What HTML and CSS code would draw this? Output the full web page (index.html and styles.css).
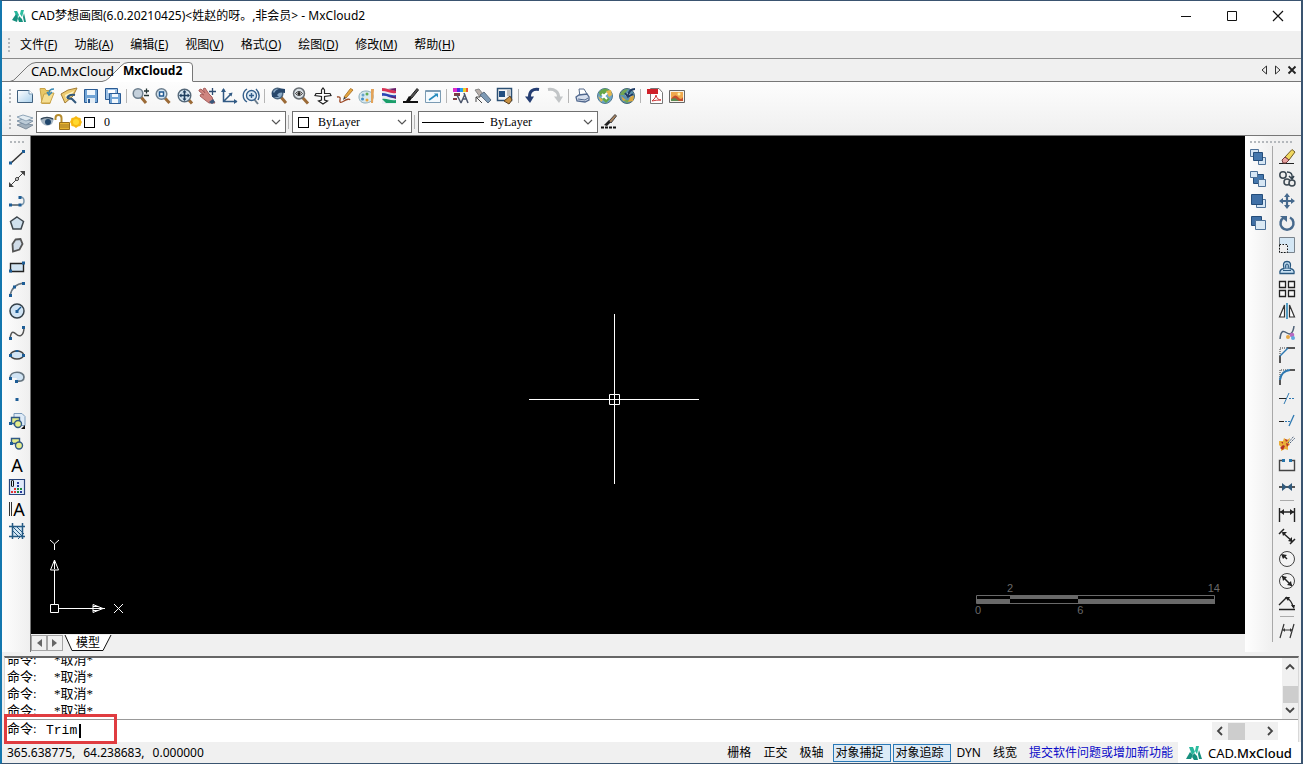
FILE: index.html
```
<!DOCTYPE html>
<html lang="zh-CN">
<head>
<meta charset="utf-8">
<title>CAD梦想画图</title>
<link rel="stylesheet" href="styles.css">
</head>
<body>
<div class="window">
  <header class="titlebar">
    <svg class="logo" viewBox="0 0 16 16"><path d="M3 3h3l2 4-2 3z" fill="#28b79c"/><path d="M1 12L5 6l2 4-1 4z" fill="#178f7e"/><path d="M10 2h3l-2 7-2-3z" fill="#2bbd9f"/><path d="M8 8l3 3 1 3H8l-1-3z" fill="#14907d"/><path d="M13 5l2 9h-2l-1-5z" fill="#178f7e"/></svg>
    <h1 class="title">CAD梦想画图(6.0.20210425)&lt;姓赵的呀。,非会员&gt; - MxCloud2</h1>
    <div class="caption">
      <button aria-label="最小化"><svg viewBox="0 0 12 12"><path d="M1 6.500h10" stroke="#111"/></svg></button>
      <button aria-label="最大化"><svg viewBox="0 0 12 12"><path d="M1.500 1.500h9v9h-9z" fill="none" stroke="#111"/></svg></button>
      <button aria-label="关闭"><svg viewBox="0 0 12 12"><path d="M1 1l10 10M11 1L1 11" stroke="#111" stroke-width="1.200"/></svg></button>
    </div>
  </header>
  <nav class="menubar">
    <span class="grip"></span>
    <button>文件(<u>F</u>)</button><button>功能(<u>A</u>)</button><button>编辑(<u>E</u>)</button><button>视图(<u>V</u>)</button><button>格式(<u>O</u>)</button><button>绘图(<u>D</u>)</button><button>修改(<u>M</u>)</button><button>帮助(<u>H</u>)</button>
  </nav>
  <div class="tabs">
    <svg class="tabshape" viewBox="0 0 200 23"><path d="M8 22.500Q12 22 15 18L26 7Q30 3.500 34 3.500H118" fill="none" stroke="#777"/><path d="M100 22.500Q104 22 107 19L119 7Q122 3.500 126 3.500H187Q190.500 3.500 190.500 7V23H100z" fill="#fff"/><path d="M100 22.500Q104 22 107 19L119 7Q122 3.500 126 3.500H187Q190.500 3.500 190.500 7V22" fill="none" stroke="#777"/></svg>
    <button class="tab">CAD.MxCloud</button><button class="tab on">MxCloud2</button>
    <div class="tabctl">
      <button aria-label="上一个"><svg viewBox="0 0 12 12"><path d="M8.500 2v8L4 6z" fill="none" stroke="#333"/></svg></button>
      <button aria-label="下一个"><svg viewBox="0 0 12 12"><path d="M3.500 2v8L8 6z" fill="none" stroke="#333"/></svg></button>
      <button aria-label="关闭标签"><svg viewBox="0 0 12 12"><path d="M2.500 2.500l7 7M9.500 2.500l-7 7" stroke="#222" stroke-width="1.800"/></svg></button>
    </div>
  </div>
  <div class="bars">
    <div class="bar">
      <span class="grip"></span>
      <button aria-label="新建"><svg viewBox="0 0 18 18"><defs><linearGradient id="sheetfill" x2="1" y2="1"><stop stop-color="#fff"/><stop offset="1" stop-color="#a9d0ec"/></linearGradient></defs><path d="M1.500 3.500H13l3.500 3.500v8.500h-15z" fill="url(#sheetfill)" stroke="#40607e"/><path d="M13 3v4h4" fill="#fff" stroke="#7b9cb8"/></svg></button>
      <button aria-label="打开"><svg viewBox="0 0 18 18"><path d="M2 1.500h5l1 2h4v13H4z" fill="#e8c766" stroke="#c9a348"/><path d="M6 7l10-1-4 10H3z" fill="#f5de92" stroke="#c9a348"/><path d="M16 2c-4 0-5 2-5 4M9 5l2 3 3-3" fill="none" stroke="#3a8ab5" stroke-width="1.500"/></svg></button>
      <button aria-label="打开图形"><svg viewBox="0 0 18 18"><path d="M1 7l7-4 9-2-4 8-8 7z" fill="#edcc72" stroke="#a37c33"/><path d="M5 8l9-4-3 5-5 3z" fill="#fff5c8"/><path d="M15 8q-6-1-8 3M7 11l3-3M7 11l5 1 4 4" stroke="#31587c" fill="none" stroke-width="2"/></svg></button>
      <button aria-label="保存"><svg viewBox="0 0 18 18"><path d="M2.500 2.500h13v13h-13z" fill="#72a5d6" stroke="#2a5b94"/><path d="M5 3h8v5H5z" fill="#f1f7fc"/><path d="M5 11h8v5H5z" fill="#e4edf5"/><path d="M6 12h2v4H6z" fill="#2a5b94"/></svg></button>
      <button aria-label="另存为"><svg viewBox="0 0 18 18"><path d="M1.500 1.500h12v11h-12z" fill="#9dc1e5" stroke="#2a5b94"/><path d="M4 3h7v3H4z" fill="#fff"/><path d="M5.500 6.500h11v10h-11z" fill="#72a5d6" stroke="#2a5b94"/><path d="M8 7h6v3H8zM8 12h6v4H8z" fill="#f1f7fc"/></svg></button>
      <span class="sep"></span>
      <button aria-label="缩放"><svg viewBox="0 0 18 18"><path d="M9 10l5 6" stroke="#9b6a37" stroke-width="3"/><circle cx="6" cy="6.500" r="4.800" fill="#c4d0db" stroke="#6d7f8e" stroke-width="1.500"/><path d="M12 4h5M14.500 1.500v5M12 8.500h5" stroke="#233" stroke-width="1.300"/></svg></button>
      <button aria-label="窗口缩放"><svg viewBox="0 0 18 18"><path d="M10 10l5.500 6" stroke="#9b6a37" stroke-width="3"/><circle cx="7.500" cy="7" r="5.300" fill="#d6e6f2" stroke="#6d7f8e" stroke-width="1.500"/><path d="M5.500 5h4v4h-4z" fill="#fff" stroke="#235a91" stroke-width="1.500"/></svg></button>
      <button aria-label="范围缩放"><svg viewBox="0 0 18 18"><path d="M12 12l4 4.500" stroke="#9b6a37" stroke-width="3"/><circle cx="8.500" cy="8.500" r="6.300" fill="#d6e6f2" stroke="#556879" stroke-width="1.400"/><path d="M4 8.500h9M8.500 4v9" stroke="#1f3f60" stroke-width="1.600"/><path d="M3 8.500l2.500-2v4zM14 8.500l-2.500-2v4zM8.500 3l-2 2.500h4zM8.500 14l-2-2.500h4z" fill="#1f3f60"/></svg></button>
      <button aria-label="平移"><svg viewBox="0 0 18 18"><path d="M1 3l2-1 4 4-2-4 2-1 4 6 3 3 1 3 2 3h-6l-4-3-5-4 1-2 3 1-5-4z" fill="#cf8580" stroke="#a8605e"/><path d="M14.500 1v7M11 4.500h7" stroke="#2d4b70" stroke-width="1.300"/><path d="M11 15l4-3 2 3-3 2z" fill="#39577b"/></svg></button>
      <button aria-label="坐标系"><svg viewBox="0 0 18 18"><path d="M3.500 2v12.500H17M3.500 14.500L11 7" fill="none" stroke="#315a84" stroke-width="1.500"/><path d="M1 5l2.500-4L6 5zM14 12l3.500 2.500L14 17zM8.500 6.500l4-1-1 4z" fill="#315a84"/></svg></button>
      <button aria-label="旋转视图"><svg viewBox="0 0 18 18"><path d="M12 12l4 5" stroke="#6c7d8d" stroke-width="2"/><circle cx="9.500" cy="8.500" r="5" fill="#dceaf5" stroke="#345f8b" stroke-width="1.300"/><path d="M9.500 6v5M7 8.500h5M5 2C0 5 0 12 5 15M14 2c3 3 4 7 2 11" fill="none" stroke="#345f8b" stroke-width="1.400"/></svg></button>
      <span class="sep"></span>
      <button aria-label="上一视图"><svg viewBox="0 0 18 18"><path d="M10 9l6 7" stroke="#9b6a37" stroke-width="3"/><circle cx="7.500" cy="6.500" r="5.300" fill="#8babc8" stroke="#4b657e" stroke-width="1.500"/><path d="M2 10V4l2 2c3-5 7-5 11-4v4c-4-1-6-1-8 2l2 2z" fill="#27476b"/></svg></button>
      <button aria-label="实时缩放"><svg viewBox="0 0 18 18"><path d="M10 10l6 6.500" stroke="#9b6a37" stroke-width="3"/><circle cx="7" cy="6.500" r="5.500" fill="#d8dfe4" stroke="#666c72" stroke-width="1.500"/><path d="M3.500 6.500q3.500-4 7 0-3.500 4-7 0z" fill="#fff" stroke="#333"/><circle cx="7" cy="6.500" r="1.600" fill="#222"/></svg></button>
      <button aria-label="移动视图"><svg viewBox="0 0 18 18"><path d="M7.500 6.500V3L9 1l1.500 2v3.500H16l1 2-6.500 1V13l3 1-4.500 3-4.500-3 3-1V9.500L1 8.500l1-2z" fill="#fff" stroke="#222" stroke-width="1.200"/></svg></button>
      <button aria-label="画笔"><svg viewBox="0 0 18 18"><path d="M8 10l6.500-8.500L17 3l-7 8z" fill="#e7a83f" stroke="#b07a34"/><path d="M8 10l-1 3 3-2z" fill="#333"/><path d="M1 10q4-1 3 3t4 1 6-1" fill="none" stroke="#9b4724" stroke-width="1.300"/></svg></button>
      <button aria-label="调色板"><svg viewBox="0 0 18 18"><path d="M8 4c5 0 8 3 7 7s-5 5-8 5-6-2-6-6 3-6 7-6z" fill="#d8e9ef" stroke="#88a9b7"/><circle cx="5" cy="8" r="1.500" fill="#6aa6cc"/><circle cx="9" cy="7" r="1.500" fill="#61ac52"/><circle cx="4.500" cy="12" r="1.500" fill="#438cc5"/><circle cx="9" cy="13" r="1.500" fill="#eaa335"/><path d="M13 2h3l-1 14h-2z" fill="#e3a35a"/></svg></button>
      <button aria-label="图层颜色"><svg viewBox="0 0 18 18"><path d="M2 1h14v16H2z" fill="#e9eef2"/><path d="M2 1c5 0 8 3 14 2v3C10 7 7 4 2 4z" fill="#d83355"/><path d="M2 6c5 0 8 3 14 2v3C10 12 7 8 2 9z" fill="#2845b4"/><path d="M2 12c5-1 8 2 14 1v3H6z" fill="#1a9e6a"/><path d="M8 2l8-1v3zM9 9l7 1v2z" fill="#6b1c67"/></svg></button>
      <button aria-label="线型"><svg viewBox="0 0 18 18"><path d="M1 15h15" stroke="#111" stroke-width="2"/><path d="M4 14l3-5 3 2-2 3z" fill="#111"/><path d="M8 10l7-8.500 1.500 1.500L10 11z" fill="#555" stroke="#222"/></svg></button>
      <button aria-label="全屏"><svg viewBox="0 0 18 18"><path d="M1.500 3.500h15v12h-15z" fill="#f4fafe" stroke="#7b9bb3"/><path d="M2 4h14" stroke="#7b9bb3" stroke-width="2"/><path d="M5 13l7-5" stroke="#258bbd" stroke-width="1.600"/><path d="M10 6.500h4v4z" fill="#258bbd"/></svg></button>
      <span class="sep"></span>
      <button aria-label="特性"><svg viewBox="0 0 18 18"><path d="M1 1h4v4H1z" fill="#e02bc7"/><path d="M5 1h3v4H5z" fill="#5229df"/><path d="M8 1h3v4H8z" fill="#26a0ee"/><path d="M11 1h3v4h-3z" fill="#e8d128"/><path d="M14 1h2v4h-2z" fill="#ef5437"/><path d="M2 6h6v3H2zM1 11h4v2H1z" fill="#7b3d42"/><path d="M5 8l4 8M12 6l4 10M13 7l-4 9M11 12h4" stroke="#4b556b" stroke-width="1.500"/></svg></button>
      <button aria-label="特性匹配"><svg viewBox="0 0 18 18"><path d="M1 3l4-1 4 5-3 3z" fill="#b8afaa" stroke="#888"/><path d="M6 8l4-3 7 8-3 3z" fill="#7d9ab5" stroke="#5c6e82"/><path d="M2 10v5M2 10h4M2 10l6 6" stroke="#444" fill="none"/></svg></button>
      <button aria-label="属性窗口"><svg viewBox="0 0 18 18"><path d="M1.500 1.500h14v12h-14z" fill="#f5f5f5" stroke="#2c5074" stroke-width="1.500"/><path d="M3 4h6v6H3z" fill="#234f80"/><path d="M11 4h3M11 6h3M11 8h3" stroke="#888"/><path d="M8 14l6-5 2 4-3 4z" fill="#c89142" stroke="#5a4022"/></svg></button>
      <span class="sep"></span>
      <button aria-label="撤销"><svg viewBox="0 0 18 18"><path d="M15 2.500C9 1.500 5 4 5.500 11" fill="none" stroke="#253e73" stroke-width="3"/><path d="M1 9.500h9L6 16z" fill="#253e73"/></svg></button>
      <button aria-label="重做"><svg viewBox="0 0 18 18"><path d="M2 2.500c6-1 11 2 10.500 8.500" fill="none" stroke="#c2c5c7" stroke-width="3"/><path d="M8 9.500h9L13 16z" fill="#c2c5c7"/></svg></button>
      <span class="sep"></span>
      <button aria-label="打印"><svg viewBox="0 0 18 18"><path d="M5 2h5l3 5-7 3z" fill="#fff" stroke="#566b8a"/><path d="M2 10l3-2 8-1 2 3v3l-4 2-8-1z" fill="#d7dfed" stroke="#51688e" stroke-width="1.300"/><path d="M4 12l7 1 3-2" stroke="#51688e" fill="none"/></svg></button>
      <button aria-label="网页"><svg viewBox="0 0 18 18"><circle cx="9" cy="9" r="7.500" fill="#6da6ca" stroke="#527a91"/><path d="M3 5q5-6 10-2l-4 4-5 2zM5 11l6-1 3 2-4 4z" fill="#65a749"/><path d="M2 9l5 4-2 2zM10 4l5-1 1 5-3 2z" fill="#e3b74c"/><path d="M6 7l5 5M6 11l5-5" stroke="#fff" stroke-width="2"/></svg></button>
      <button aria-label="更新"><svg viewBox="0 0 18 18"><circle cx="9" cy="9" r="7.500" fill="#5d94ad" stroke="#466777"/><path d="M2 8q2-6 8-6L6 8zM5 13l8 0-4 3z" fill="#73a752"/><path d="M3 9l5 4-3 1zM13 8l3 1-1 5-5 1z" fill="#d9a63f"/><path d="M7 8l3 3 4-2-4-3z" fill="#fff"/><path d="M17 2q-6 0-7 7M7 6l3 4 5-3" fill="none" stroke="#203d66" stroke-width="2"/></svg></button>
      <span class="sep"></span>
      <button aria-label="导出 PDF"><svg viewBox="0 0 18 18"><path d="M4.500 1.500H13l3.500 4v11h-12z" fill="#fff" stroke="#777"/><path d="M1 2h11v5H1z" fill="#cf2029"/><path d="M6 14q4-3 4-6 1 5 5 5-5 0-9 1z" fill="none" stroke="#cf3c3c"/></svg></button>
      <button aria-label="导出图像"><svg viewBox="0 0 18 18"><path d="M1.500 3.500h15v12h-15z" fill="#f8f3e8" stroke="#666"/><path d="M3 5h12v9H3z" fill="#f0a94d"/><path d="M3 12q4-6 7-2t5 0v4H3z" fill="#c44f2d"/><path d="M3 12l4-1 4 3H3z" fill="#5c8c54"/><circle cx="11" cy="7" r="1.500" fill="#fff5ab"/></svg></button>
    </div>
    <div class="bar">
      <span class="grip"></span>
      <button aria-label="图层"><svg viewBox="0 0 18 18"><path d="M1 12l6-2 10 2-7 4z" fill="#a0afbc" stroke="#7f8e9d"/><path d="M1 8l6-2 10 2-7 4z" fill="#bccbd7" stroke="#7d92a6"/><path d="M1 4l6-2 10 3-7 3z" fill="#e3ecf2" stroke="#8fa5b8"/></svg></button>
      <div class="combo layer">
        <svg class="eye" viewBox="0 0 14 16"><path d="M0 5q6-4 14 0l-2 5q-6 4-10-1z" fill="#a5b5c2"/><path d="M1 5q6-3 12 0" stroke="#37495a" stroke-width="1.500" fill="none"/><circle cx="8" cy="8" r="3" fill="#20466b"/></svg><svg class="lock" viewBox="0 0 16 16"><path d="M1.500 6V4q0-3 3-3T7.500 4v5" fill="none" stroke="#b68c2e" stroke-width="2"/><path d="M5.500 8.500h10v7h-10z" fill="#e7b430" stroke="#99701f"/><path d="M6 11h9M6 13h9" stroke="#a47b27"/></svg><svg class="sun" viewBox="0 0 12 16"><path d="M6 2l2 1.500 2.500.500.500 2.500 1 1.500-1 2-.500 2L8 12.500 6 14l-2-1.500L1.500 12 1 9.500 0 8l1-2 .500-2L4 3.500z" fill="#f8b911"/><circle cx="6" cy="8" r="3" fill="#ffd92e"/></svg><span class="swatch"></span>
        <select aria-label="图层名称"><option>0</option></select>
        <svg class="chev" viewBox="0 0 10 10"><path d="M1 3l4 4 4-4" fill="none" stroke="#555" stroke-width="1.200"/></svg>
      </div>
      <span class="sep"></span>
      <div class="combo color"><span class="swatch"></span>
        <select aria-label="颜色"><option>ByLayer</option></select>
        <svg class="chev" viewBox="0 0 10 10"><path d="M1 3l4 4 4-4" fill="none" stroke="#555" stroke-width="1.200"/></svg>
      </div>
      <span class="sep"></span>
      <div class="combo line"><span class="stroke"></span>
        <select aria-label="线型选择"><option>ByLayer</option></select>
        <svg class="chev" viewBox="0 0 10 10"><path d="M1 3l4 4 4-4" fill="none" stroke="#555" stroke-width="1.200"/></svg>
      </div>
      <button aria-label="线宽设置"><svg viewBox="0 0 18 18"><path d="M1 14.500h16" stroke="#111" stroke-width="2" stroke-dasharray="3 1"/><path d="M4 12l5-5 2 2-4 4z" fill="#222"/><path d="M9 8l6-6.500L16.500 3 11 10z" fill="#a8815d" stroke="#444"/></svg></button>
    </div>
  </div>
  <main class="work">
    <div class="side">
      <span class="hgrip"></span>
      <button aria-label="直线"><svg viewBox="0 0 18 18"><path d="M3 15L15 4" stroke="#333" stroke-width="1.500"/><path d="M1 13.500h3v3H1zM14 2h3v3h-3z" fill="#1d5d96"/></svg></button>
      <button aria-label="构造线"><svg viewBox="0 0 18 18"><path d="M2 16L16 2" stroke="#444"/><path d="M1 17v-5l5 5zM17 1v5l-5-5z" fill="#444"/><circle cx="9" cy="9" r="1.500" fill="#fff" stroke="#333"/></svg></button>
      <button aria-label="多段线"><svg viewBox="0 0 18 18"><path d="M2 13h10q4 0 4-4t-4-4" fill="none" stroke="#7b96aa" stroke-width="1.500"/><path d="M2 13h10" stroke="#555"/><path d="M1 11.500h3v3H1zM10.500 11.500h3v3h-3zM10.500 4h3v3h-3z" fill="#1d5d96"/></svg></button>
      <button aria-label="多边形"><svg viewBox="0 0 18 18"><path d="M9 3l6.500 4.500L13 15H5L2.500 7.500z" fill="#cfe0ee" stroke="#3e464d" stroke-width="1.500"/></svg></button>
      <button aria-label="不规则多边形"><svg viewBox="0 0 18 18"><path d="M7.500 3.500l5-.500 2 5-3 5.500-6.500 2L4.500 8z" fill="#d0dce8" stroke="#555" stroke-width="1.800"/></svg></button>
      <button aria-label="矩形"><svg viewBox="0 0 18 18"><path d="M2.500 5.500h13v8h-13z" fill="#d1e3f1" stroke="#222" stroke-width="1.400"/><path d="M1 11.500h3v3H1zM14 3.500h3v3h-3z" fill="#1d5d96"/></svg></button>
      <button aria-label="圆弧"><svg viewBox="0 0 18 18"><path d="M2 16Q4 4 16 3" fill="none" stroke="#68757f" stroke-width="1.500"/><path d="M1 14h3v3H1zM5 5.500h3v3H5zM14 2h3v3h-3z" fill="#1d5d96"/></svg></button>
      <button aria-label="圆"><svg viewBox="0 0 18 18"><circle cx="9" cy="9" r="7" fill="#d1e4f4" stroke="#35414a" stroke-width="1.500"/><path d="M9 9l4-4" stroke="#1d5d96" stroke-width="1.500"/><path d="M7.500 8h3v3h-3z" fill="#1d5d96"/></svg></button>
      <button aria-label="样条曲线"><svg viewBox="0 0 18 18"><path d="M2 15C3 7 5 7 8 10s8 3 8-7" fill="none" stroke="#555" stroke-width="1.500"/><path d="M1 13h3v3H1zM14 2h3v3h-3z" fill="#1d5d96"/></svg></button>
      <button aria-label="椭圆"><svg viewBox="0 0 18 18"><ellipse cx="9" cy="9" rx="6.500" ry="4" fill="#d1e4f4" stroke="#444" stroke-width="1.500"/><path d="M1 8h3v3H1zM14 8h3v3h-3zM7.500 4h3v2h-3z" fill="#1d5d96"/></svg></button>
      <button aria-label="椭圆弧"><svg viewBox="0 0 18 18"><path d="M2 10C2 2 16 3 16 9q0 5-8 4l1-3z" fill="#d1e4f4"/><path d="M2 10C2 2 16 3 16 9q0 5-7 4" fill="none" stroke="#667580" stroke-width="1.700"/><path d="M1 9h3v3H1zM7 12h3v3H7z" fill="#1d5d96"/></svg></button>
      <button aria-label="点"><svg viewBox="0 0 18 18"><path d="M7.500 8h3v3h-3z" fill="#1d5d96"/></svg></button>
      <button aria-label="插入块"><svg viewBox="0 0 18 18"><path d="M6 1.500h8l3 3v9H6z" fill="#dfebf7" stroke="#7b9bbb"/><path d="M3.500 5.500h8v6h-8z" fill="#e5ed8b" stroke="#315985" stroke-width="1.400"/><circle cx="10" cy="12" r="3.500" fill="#e5ed8b" stroke="#315985" stroke-width="1.400"/><path d="M1 10h3v3H1z" fill="#1d5d96"/><path d="M17 13v4h-4z" fill="#111"/></svg></button>
      <button aria-label="创建块"><svg viewBox="0 0 18 18"><path d="M3.500 4.500h8v5h-8z" fill="#e5ed8b" stroke="#315985" stroke-width="1.400"/><circle cx="11" cy="11.500" r="3.500" fill="#e5ed8b" stroke="#315985" stroke-width="1.400"/><path d="M2 8h3v3H2z" fill="#1d5d96"/></svg></button>
      <button class="glyph" aria-label="文字">A</button>
      <button aria-label="表格"><svg viewBox="0 0 18 18"><path d="M1.500 1.500h15v15h-15z" fill="#e0eafa" stroke="#29457c" stroke-width="1.200"/><path d="M3 13h2v2H3zM6 10h2v2H6zM6 13h2v2H6z" fill="#df3636"/><path d="M9 10h2v2H9zM12 10h2v2h-2zM9 13h2v2H9z" fill="#1b883a"/><path d="M9 4h2v2H9zM9 7h2v2H9zM12 13h2v2h-2z" fill="#273a98"/><path d="M3.500 8V3q1-2 2 0v5q-1 2-2 0" fill="none" stroke="#111"/></svg></button>
      <button class="glyph" aria-label="多行文字"><svg class="bars2" viewBox="0 0 4 16"><path d="M.500 1v14M2.500 1v14" stroke="#333"/></svg>A</button>
      <button aria-label="填充"><svg viewBox="0 0 18 18"><path d="M4 4h10v10H4z" fill="#d3e6f3"/><path d="M4.500 1v16M14.500 1v16M1 4.500h16M1 14.500h16" stroke="#245a84" stroke-width="1.500"/><path d="M5 5l9 9M9 5l5 5M5 9l5 5M16 11l-6 6" stroke="#245a84"/></svg></button>
    </div>
    <div class="center">
      <div class="canvas">
        <svg class="cross" viewBox="0 0 171 171"><path d="M85.500 0v80M85.500 91v79M0 85.500h80M91 85.500h79M80.500 80.500h10v10h-10zM85.500 81v9M81 85.500h9" stroke="#fff" fill="none"/></svg>
        <svg class="ucs" viewBox="0 0 80 80"><path d="M5.500 33v34M10 71.500h46M1.500 67.500h8v8h-8zM5.500 23v9M5.500 23l-4 10h8zM44 67.500l10 4-10 4zM44 69.500h5M44 73.500h5M1 3l4.500 4v6M10 3L5.500 7M65 67l9 9M74 67l-9 9" fill="none" stroke="#fff"/></svg>
        <div class="scale">
          <div class="nums"><span>2</span><span>14</span></div>
          <svg class="ruler" viewBox="0 0 240 9" preserveAspectRatio="none"><path d="M.500.500h238v8H.500z" fill="#000" stroke="#696969"/><path d="M1 4h33v5H1zM34 0h68v4H34zM102 4h137v5H102z" fill="#696969"/></svg>
          <div class="nums low"><span>0</span><span>6</span></div>
        </div>
      </div>
      <div class="sheets">
        <button class="arr" aria-label="左移"><svg viewBox="0 0 12 12"><path d="M9 2v8L4 6z" fill="#666"/></svg></button><button class="arr" aria-label="右移"><svg viewBox="0 0 12 12"><path d="M3 2v8l5-4z" fill="#666"/></svg></button>
        <button class="sheet"><svg viewBox="0 0 48 16"><path d="M1 0l7 15h31L47 0z" fill="#fff"/><path d="M1 0l7 15.500h31L47 0" fill="none" stroke="#111"/></svg><span>模型</span></button>
      </div>
    </div>
    <div class="right">
      <span class="hgrip wide"></span>
      <div class="cols">
        <div class="col order">
          <button aria-label="前置"><svg viewBox="0 0 18 18"><path d="M1.500 1.500h8v7h-8zM9.500 9.500h7v7h-7z" fill="#d6e6f4" stroke="#4d7198"/><path d="M4.500 4.500h9v8h-9z" fill="#4477ad" stroke="#244d7a"/></svg></button>
          <button aria-label="后置"><svg viewBox="0 0 18 18"><path d="M4.500 4.500h10v9h-10z" fill="#4477ad" stroke="#244d7a"/><path d="M1.500 1.500h7v6h-7zM9.500 9.500h7v7h-7z" fill="#d6e6f4" stroke="#4d7198"/></svg></button>
          <button aria-label="置于对象之上"><svg viewBox="0 0 18 18"><path d="M7.500 7.500h9v8h-9z" fill="#d6e6f4" stroke="#4d7198"/><path d="M2.500 2.500h11v10h-11z" fill="#4070a6" stroke="#244d7a"/></svg></button>
          <button aria-label="置于对象之下"><svg viewBox="0 0 18 18"><path d="M2.500 2.500h10v9h-10z" fill="#4070a6" stroke="#244d7a"/><path d="M6.500 6.500h10v9h-10z" fill="#dbe9f4" stroke="#4d7198"/></svg></button>
        </div>
        <div class="col edit">
          <button aria-label="删除"><svg viewBox="0 0 18 18"><path d="M1 15.500h15" stroke="#222"/><path d="M7 9l7-7.500L17 4l-6 8z" fill="#f0d75e" stroke="#6f5a23"/><path d="M4 12l3-3 4 3-3 3H5z" fill="#e9a3a1" stroke="#743b3b"/></svg></button>
          <button aria-label="复制"><svg viewBox="0 0 18 18"><circle cx="5" cy="5" r="3.200" fill="#eee" stroke="#3c4852" stroke-width="1.500"/><circle cx="9" cy="12" r="3" fill="#eee" stroke="#3c4852" stroke-width="1.500"/><circle cx="14" cy="13" r="3" fill="#eee" stroke="#3c4852" stroke-width="1.500"/><path d="M9 2q6 0 5 6M11 6l3 3 2-3" fill="none" stroke="#33424e" stroke-width="1.500"/></svg></button>
          <button aria-label="移动"><svg viewBox="0 0 18 18"><path d="M9 3v12M3 9h12" stroke="#46698d" stroke-width="2.200"/><path d="M9 1l3 4H6zM9 17l3-4H6zM1 9l4-3v6zM17 9l-4-3v6z" fill="#46698d"/></svg></button>
          <button aria-label="旋转"><svg viewBox="0 0 18 18"><path d="M6 3.500a6.500 6.500 0 1 0 6 0" fill="none" stroke="#46698d" stroke-width="2.500"/><path d="M2 2h7v6z" fill="#46698d"/></svg></button>
          <button aria-label="缩放对象"><svg viewBox="0 0 18 18"><path d="M1.500 1.500h15v15h-15z" fill="#d4e7f5" stroke="#79838c"/><path d="M1.500 8.500h8v8h-8z" fill="#eee" stroke="#111" stroke-dasharray="1.500 1.500"/></svg></button>
          <button aria-label="偏移"><svg viewBox="0 0 18 18"><path d="M2 15.500h14q1-4-4-5 2-7-3-7t-3 7q-5 1-4 5z" fill="#c7e0f3" stroke="#28577f" stroke-width="1.300"/><path d="M5 12.500h8M8 11q-1-5 1-5t1 5" fill="none" stroke="#28577f" stroke-width="1.200"/></svg></button>
          <button aria-label="阵列"><svg viewBox="0 0 18 18"><path d="M1.500 1.500h6v6h-6zM10.500 1.500h6v6h-6zM1.500 10.500h6v6h-6zM10.500 10.500h6v6h-6z" fill="#f8f8f8" stroke="#222" stroke-width="1.300"/></svg></button>
          <button aria-label="镜像"><svg viewBox="0 0 18 18"><path d="M6.500 3v12h-5zM11.500 3v12h5z" fill="#fff" stroke="#333" stroke-width="1.200"/><path d="M9 1v16" stroke="#2282b5" stroke-width="1.500"/></svg></button>
          <button aria-label="编辑曲线"><svg viewBox="0 0 18 18"><path d="M2 15C3 5 6 7 9 9s6 1 7-7" fill="none" stroke="#4e6176" stroke-width="1.500"/><circle cx="10" cy="13" r="2" fill="#e5a745"/><circle cx="14" cy="11" r="2.300" fill="#b768bf"/><circle cx="15" cy="14" r="2" fill="#62a7dd"/></svg></button>
          <button aria-label="倒角"><svg viewBox="0 0 18 18"><path d="M2 17v-7M9 2h8" stroke="#222" stroke-width="1.500"/><path d="M2 10V2h7" fill="none" stroke="#333" stroke-dasharray="1 1"/><path d="M2 10l8-8" stroke="#2d78b1" stroke-width="1.500"/></svg></button>
          <button aria-label="圆角"><svg viewBox="0 0 18 18"><path d="M2 17v-5M12 2h5" stroke="#222" stroke-width="1.500"/><path d="M2 11V2h9" fill="none" stroke="#333" stroke-dasharray="1 1"/><path d="M2 12Q3 3 12 2" fill="none" stroke="#2d78b1" stroke-width="2"/></svg></button>
          <button aria-label="修剪"><svg viewBox="0 0 18 18"><path d="M1 8.500h7" stroke="#222"/><path d="M11 8.500h6" stroke="#2d78b1" stroke-dasharray="2 1"/><path d="M6 14l5-11" stroke="#2d78b1"/></svg></button>
          <button aria-label="延伸"><svg viewBox="0 0 18 18"><path d="M1 9.500h5" stroke="#222"/><path d="M7 9.500h6" stroke="#2d78b1" stroke-dasharray="2 1"/><path d="M11 14l5-11" stroke="#2d78b1" stroke-width="1.300"/></svg></button>
          <button aria-label="分解"><svg viewBox="0 0 18 18"><path d="M1 7l4 0 1-3 3 2 3-2-1 4 1 3-2 1v4l-3-1-4 2 0-4-2-2z" fill="#eaae38"/><path d="M2 14l3-3 2 1-2 4zM7 5l3 1-2 2zM8 9l3 1-2 3zM3 8l2 0 0 2z" fill="#b53026"/><path d="M10 9l6-7M12 9l5-5" stroke="#4c617b" stroke-dasharray="2 1"/></svg></button>
          <button aria-label="打断"><svg viewBox="0 0 18 18"><path d="M4 4.500H1.500v10h15v-10H14" fill="none" stroke="#444" stroke-width="1.400"/><path d="M4 3h3v3H4zM11 3h3v3h-3z" fill="#2673a8"/></svg></button>
          <button aria-label="合并"><svg viewBox="0 0 18 18"><path d="M1 9h16" stroke="#222" stroke-width="1.500"/><path d="M4 5l5 4-5 4zM14 5L9 9l5 4z" fill="#315a7c"/></svg></button>
          <span class="hsep"></span>
          <button aria-label="线性标注"><svg viewBox="0 0 18 18"><path d="M1.500 2v14M16.500 2v14M2 6h14" stroke="#222" stroke-width="1.400"/><path d="M2 6l4-3v6zM16 6l-4-3v6z" fill="#222"/></svg></button>
          <button aria-label="对齐标注"><svg viewBox="0 0 18 18"><path d="M5 5l9 8M1 6l5-5M12 16l5-5" stroke="#222" stroke-width="1.500"/><path d="M4 4h5l-4 4zM14 14v-5l-4 4z" fill="#222"/></svg></button>
          <button aria-label="半径标注"><svg viewBox="0 0 18 18"><circle cx="9" cy="9" r="7.500" fill="#f4f4f4" stroke="#444"/><path d="M9 9L5 5" stroke="#222" stroke-width="1.500"/><path d="M3 4l6 1-4 4z" fill="#222"/></svg></button>
          <button aria-label="直径标注"><svg viewBox="0 0 18 18"><circle cx="9" cy="9" r="7.500" fill="#f4f4f4" stroke="#444"/><path d="M4 4l10 10" stroke="#222" stroke-width="1.500"/><path d="M4 4l5 1-4 4zM14 14l-5-1 4-4z" fill="#222"/></svg></button>
          <button aria-label="角度标注"><svg viewBox="0 0 18 18"><path d="M1 15.500h16M1 11l8-8" stroke="#222" stroke-width="1.400"/><path d="M9 4q5 3 6 9" fill="none" stroke="#222" stroke-width="1.300"/><path d="M7 3h5l-2 4zM13 11h4l-1 4z" fill="#222"/></svg></button>
          <span class="hsep"></span>
          <button aria-label="编辑标注"><svg viewBox="0 0 18 18"><path d="M2 16L6 2M12 16l4-14M4 8h10" stroke="#333" stroke-width="1.200"/><path d="M5 8l2-2v4zM14 8l-2-2v4z" fill="#333"/></svg></button>
        </div>
      </div>
    </div>
  </main>
  <section class="command">
    <div class="history">
      <div class="log"><div class="lines">
        <p><span>命令:</span><span>*取消*</span></p><p><span>命令:</span><span>*取消*</span></p><p><span>命令:</span><span>*取消*</span></p><p><span>命令:</span><span>*取消*</span></p>
      </div></div>
      <div class="vscroll"><svg viewBox="0 0 10 10"><path d="M1 7l4-4 4 4" fill="none" stroke="#444" stroke-width="1.800"/></svg><i></i><svg viewBox="0 0 10 10"><path d="M1 3l4 4 4-4" fill="none" stroke="#444" stroke-width="1.800"/></svg></div>
    </div>
    <div class="prompt">
      <label for="cmd">命令:</label><input id="cmd" value="Trim" autocomplete="off" spellcheck="false"><span class="caret"></span>
      <div class="hscroll"><svg viewBox="0 0 10 10"><path d="M7 1L3 5l4 4" fill="none" stroke="#444" stroke-width="1.800"/></svg><i></i><svg viewBox="0 0 10 10"><path d="M3 1l4 4-4 4" fill="none" stroke="#444" stroke-width="1.800"/></svg></div>
      <div class="mark"></div>
    </div>
  </section>
  <footer class="status">
    <output class="coords"><span>365.638775,</span><span>64.238683,</span><span>0.000000</span></output>
    <button>栅格</button><button>正交</button><button>极轴</button><button class="on">对象捕捉</button><button class="on">对象追踪</button><button class="dyn">DYN</button><button>线宽</button>
    <a href="#feedback">提交软件问题或增加新功能</a>
    <div class="brand"><svg class="logo" viewBox="0 0 16 16"><path d="M3 2h4l2 5-3 3z" fill="#28b79c"/><path d="M0 14L4 7l3 3-2 4z" fill="#178f7e"/><path d="M10 1h3l-2 8-2-3z" fill="#2bbd9f"/><path d="M8 8l3 3 1 4H8l-2-3z" fill="#14907d"/><path d="M13 5l3 9h-3l-1-5z" fill="#178f7e"/></svg><span>CAD.<b>MxCloud</b></span></div>
  </footer>
</div>
</body>
</html>
```

FILE: styles.css
```
* { box-sizing: border-box; }
body { margin: 0; }
button { border: 0; padding: 0; margin: 0; background: none; font: inherit; color: inherit; }
svg { display: block; flex: none; }
.window {
  display: flex; flex-direction: column; height: 100vh; overflow: hidden;
  border: 1px solid #3a5470; border-left: 2px solid #1477ae; border-right-width: 2px;
  background: #f0f0f0; color: #000;
  font: 12px/16px "Noto Sans", "Noto Sans CJK SC", sans-serif;
}
.titlebar { display: flex; align-items: center; height: 30px; padding-left: 9px; background: #fff; }
.logo { width: 16px; height: 16px; }
.title { flex: 1; margin: 0 0 0 4px; font-size: 12px; font-weight: 400; white-space: nowrap; }
.caption { display: flex; }
.caption button { display: grid; place-items: center; width: 46px; height: 30px; }
.caption svg { width: 12px; height: 12px; }

.menubar { display: flex; align-items: center; height: 28px; padding-left: 4px; border-bottom: 1px solid #8a8a8a; }
.menubar button { padding: 0 8px; margin-right: 1px; }
.grip { flex: none; width: 2px; height: 14px; margin: 0 3px 0 2px; background: repeating-linear-gradient(#b4b8bc 0 2px, transparent 2px 4px); }
.menubar .grip { margin-right: 2px; }

.tabs { position: relative; display: flex; align-items: center; height: 23px; padding-left: 29px; border-bottom: 1px solid #777; font-size: 13px; }
.tabshape { position: absolute; left: 0; top: 0; width: 200px; height: 23px; }
.tab { position: relative; width: 92px; padding-top: 2px; text-align: left; }
.tab.on { font-weight: 700; font-size: 12px; }
.tabctl { display: flex; margin-left: auto; padding-right: 2px; }
.tabctl button { display: grid; place-items: center; width: 14px; height: 16px; }
.tabctl svg { width: 12px; height: 12px; }

.bars { padding: 1px 0 0 5px; background: linear-gradient(#fdfdfd, #efefef); border-bottom: 1px solid #777; }
.bar { display: flex; align-items: center; height: 26px; }
.bar button, .side button, .col button { display: grid; place-items: center; flex: none; width: 22px; height: 22px; }
.bar button svg, .side button svg, .col button svg { width: 18px; height: 18px; }
.sep { flex: none; width: 1px; height: 14px; margin: 0 3px 0 2px; background: #b5b5b5; }
.combo { display: flex; align-items: center; height: 22px; padding: 0 4px 0 3px; border: 1px solid #707070; background: #fff; }
.combo select { flex: 1; min-width: 0; padding: 0; border: 0; appearance: none; background: none; color: #000; font: 12px/16px "Liberation Serif", serif; }
.layer { width: 250px; }
.color { width: 120px; }
.line { width: 180px; }
.combo select { margin-left: 9px; }
.line select { margin-left: 6px; }
.eye { width: 14px; height: 16px; }
.lock { width: 16px; height: 16px; }
.sun { width: 12px; height: 16px; }
.swatch { width: 11px; height: 11px; margin-left: 2px; border: 1px solid #000; }
.stroke { width: 62px; height: 1px; background: #000; }
.chev { width: 10px; height: 10px; }

.work { display: flex; flex: 1; min-height: 0; }
.side { display: flex; flex-direction: column; align-items: center; width: 29px; padding: 5px 0 0 2px; background: linear-gradient(90deg, #fdfdfd, #efefef); border-right: 1px solid #777; }
.hgrip { flex: none; width: 14px; height: 2px; margin-bottom: 3px; background: repeating-linear-gradient(90deg, #b4b8bc 0 2px, transparent 2px 4px); }
.hgrip.wide { width: 42px; margin-left: 5px; }
.side .glyph { display: flex; align-items: center; justify-content: center; font-size: 18px; line-height: 22px; }
.side .glyph .bars2 { width: 4px; height: 16px; }
.center { display: flex; flex-direction: column; flex: 1; min-width: 0; }
.canvas { position: relative; flex: 1; overflow: hidden; background: #000; }
.cross { position: absolute; left: 498px; top: 178px; width: 171px; height: 171px; }
.ucs { position: absolute; left: 18px; bottom: 17px; width: 80px; height: 80px; }
.scale { position: absolute; right: 25px; bottom: 18px; width: 245px; color: #696969; font: 11px/12px "Liberation Sans", sans-serif; }
.nums { display: flex; justify-content: space-between; padding: 0 0 1px 32px; }
.nums.low { justify-content: flex-start; gap: 96px; padding: 0; }
.ruler { width: 240px; height: 9px; margin-left: 1px; }
.sheets { display: flex; align-items: flex-start; height: 18px; padding-top: 1px; }
.arr { display: grid; place-items: center; width: 16px; height: 16px; border: 1px solid #a5a5a5; }
.arr svg { width: 12px; height: 12px; }
.sheet { position: relative; width: 48px; height: 16px; margin-left: 1px; }
.sheet svg { position: absolute; left: 0; top: 0; width: 48px; height: 16px; }
.sheet span { position: relative; }

.right { width: 56px; padding-top: 5px; background: linear-gradient(90deg, #fefefe, #f0f0f0 27px); }
.right .hgrip { display: block; }
.cols { display: flex; padding-left: 2px; }
.col { display: flex; flex-direction: column; }
.col.order { width: 25px; }
.col.edit { width: 27px; padding-left: 3px; border-left: 1px solid #a8a8a8; }
.hsep { width: 14px; height: 1px; margin: 2px 0 3px 4px; background: #aaa; }

.command { margin: 4px 2px 0; background: #fff; border: 1px solid #d8d8d8; border-top: 2px solid #666; border-bottom: 0; font: 13px/17px "Liberation Serif", "Noto Sans CJK SC", serif; }
.history { display: flex; height: 62px; border-bottom: 1px solid #999; }
.log { flex: 1; height: 60px; overflow: hidden; }
.lines { margin-top: -7px; }
.lines p { display: flex; margin: 0; padding-left: 2px; }
.lines p span:first-child { width: 47px; }
.vscroll { display: flex; flex-direction: column; align-items: center; justify-content: space-between; width: 16px; padding: 4px 0; background: #f0f0f0; }
.vscroll svg, .hscroll svg { width: 10px; height: 10px; }
.vscroll i { width: 15px; height: 17px; margin-top: 12px; background: #cdcdcd; }
.prompt { position: relative; display: flex; align-items: center; height: 22px; padding-left: 2px; }
.prompt label { align-self: flex-start; width: 39px; }
.prompt input { width: 33px; height: 18px; padding: 0; border: 0; outline: 0; background: none; color: #000; font: 13px/18px "Liberation Mono", monospace; }
.caret { width: 2px; height: 14px; background: #000; }
.hscroll { display: flex; align-items: center; gap: 3px; height: 18px; margin-left: auto; margin-right: 20px; padding: 0 3px; background: #f0f0f0; }
.hscroll i { width: 17px; height: 17px; margin-right: 17px; background: #cdcdcd; }
.mark { position: absolute; left: -1px; top: -6px; width: 113px; height: 30px; border: 3px solid #e03c40; }

.status { display: flex; align-items: center; height: 21px; padding-left: 5px; white-space: nowrap; }
.coords { display: flex; gap: 8px; margin-right: auto; }
.status button { height: 18px; margin-left: 12px; border: 1px solid transparent; border-width: 1px 0; line-height: 16px; }
.status button.on { width: 58px; margin-left: 2px; padding-left: 1px; border: 1px solid #2a7ab8; background: #dcebf7; text-align: left; }
.status button:not(.on) + .on { margin-left: 10px; }
.status .dyn { margin-left: 5px; }
.status a { margin: 0 5px 0 12px; color: #0a0ac8; text-decoration: none; }
.brand { display: flex; align-items: center; gap: 6px; width: 123px; height: 21px; padding-left: 8px; background: #fff; font-size: 13px; }
.brand b { font-weight: 500; }
```
